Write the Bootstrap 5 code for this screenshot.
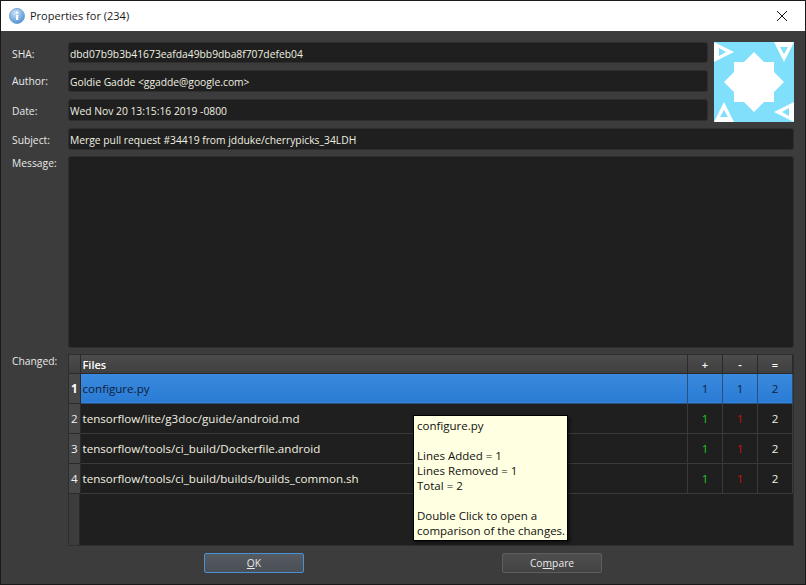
<!DOCTYPE html>
<html lang="en">
<head>
<meta charset="utf-8">
<title>Properties for (234)</title>
<link href="https://cdn.jsdelivr.net/npm/bootstrap@5.3.0/dist/css/bootstrap.min.css" rel="stylesheet">
<style>
html,body{height:100%;margin:0;background:#3c3c3c}
.win{width:806px;height:585px;border:1px solid #1a1a1a;background:#3c3c3c;font-family:"Open Sans","Noto Sans",sans-serif;font-size:10.3px;color:#e8e8e8;position:relative;overflow:hidden}
.titlebar{height:30px;background:#fff;color:#1a1a1a;font-size:11px;padding-left:8px;gap:5px}
.closex{width:46px;height:30px}
.dlgbody{padding:11px 11px 0 11px}
.lbl{width:56px;flex:none}
.fld{background:#1f1f1f;border:1px solid #2e2e2e;border-radius:3px;height:22px;line-height:22px;padding-left:1px;color:#f0f0e0;white-space:nowrap}
.toprows{gap:7px}
.toprow{height:22px}
.toprow.shortrow,.toprow.shortrow .fld{height:21px}
.logo{width:80px;height:80px;margin-left:6px;flex:none}
.subjrow{margin-top:6px;height:22px}
.lblsha{padding-top:5px}
.lblauthor{padding-top:2px}
.lbldate{padding-top:4px}
.lblsubj{padding-top:3px}
.msgrow{margin-top:6px;height:192px}
.msgrow .fld{height:192px}
.chgrow{margin-top:6px;height:192px}
.filetable{flex:1;background:linear-gradient(90deg,#3c3c3c 10px,#2a2a2a 10px,#2a2a2a 11px,#1f1f1f 11px);border:1px solid #2e2e2e;height:192px;font-size:11.6px}
.filetable table{width:100%;table-layout:fixed;border-collapse:collapse;color:#f0f0e0}
.filetable th{height:18px;line-height:14px;padding:2px 0 0;font-weight:600;font-size:11px;background:linear-gradient(#4c4c4c,#3f3f3f);border-right:1px solid #2a2a2a;border-bottom:1px solid #2a2a2a;text-align:center;color:#fff}
.filetable th.fname{text-align:left;padding-left:2px}
.filetable td{height:30px;padding:1px 0 0;line-height:16px;border-right:1px solid #3a3a3a;border-bottom:1px solid #3a3a3a;text-align:center;background:#1f1f1f}
.filetable td.rownum{background:#474747;border-right:1px solid #2a2a2a;border-bottom:1px solid #2a2a2a;color:#f0f0f0}
.filetable td.fname{text-align:left;padding-left:2px;white-space:nowrap}
.filetable tr.sel td{background:linear-gradient(#3a8ade,#2a7bd4);color:#10203a;border-color:#2a4f78}
.filetable tr.sel td.rownum{background:#474747;color:#fff;border-color:#2a2a2a;font-weight:700}
.plus{color:#22cc22}.minus{color:#cc1010}
.btnrow{height:20px;margin-top:7px;padding-left:192px;gap:198px}
.dlgbtn{width:100px;height:20px;padding:0;font-size:10.3px;line-height:17px;color:#e8e8e8;background:linear-gradient(#4e4e4e,#434343);border:1px solid #5e5e5e;border-radius:2px}
.dlgbtn:hover{color:#e8e8e8;background:#4e4e4e;border-color:#5e5e5e}
.dlgbtn.dflt{background:linear-gradient(#565b62,#4a4f55);border:1px solid #4a90d9}
.tip{position:absolute;left:412px;top:414px;width:155px;height:126px;background:#ffffe1;border:1px solid #000;font-size:11.5px;color:#101010;padding:2px 3px;line-height:15px;white-space:pre;box-shadow:2px 2px 3px rgba(0,0,0,.5)}
</style>
</head>
<body>
<div class="win d-flex flex-column">
  <div class="titlebar d-flex align-items-center">
    <svg width="16" height="16" viewBox="0 0 16 16"><defs><radialGradient id="ib" cx=".4" cy=".3" r=".8"><stop offset="0" stop-color="#cfe6fa"/><stop offset="1" stop-color="#3f86cf"/></radialGradient></defs><circle cx="8" cy="8" r="7.5" fill="url(#ib)" stroke="#7aa6cf"/><rect x="7" y="7" width="2.2" height="5" fill="#fff"/><rect x="7" y="3.6" width="2.2" height="2" fill="#fff"/></svg>
    <span class="flex-grow-1">Properties for (234)</span>
    <div class="closex d-flex align-items-center justify-content-center"><svg width="10" height="10" viewBox="0 0 10 10"><path d="M0 0L10 10M10 0L0 10" stroke="#111" stroke-width="1" fill="none"/></svg></div>
  </div>
  <div class="dlgbody flex-grow-1">
    <div class="d-flex">
      <div class="d-flex flex-column toprows flex-grow-1">
        <div class="d-flex align-items-center toprow shortrow"><div class="lbl lblsha">SHA:</div><div class="fld flex-grow-1">dbd07b9b3b41673eafda49bb9dba8f707defeb04</div></div>
        <div class="d-flex align-items-center toprow"><div class="lbl lblauthor">Author:</div><div class="fld flex-grow-1">Goldie Gadde &lt;ggadde@google.com&gt;</div></div>
        <div class="d-flex align-items-center toprow"><div class="lbl lbldate">Date:</div><div class="fld flex-grow-1">Wed Nov 20 13:15:16 2019 -0800</div></div>
      </div>
      <svg class="logo" viewBox="0 0 80 80"><rect width="80" height="80" fill="#80dffb"/><path d="M40 10L50 20H60V30L70 40L60 50V60H50L40 70L30 60H20V50L10 40L20 30V20H30Z" fill="#fff"/><path d="M0 0L20 10L0 20Z M5 6V14L12 10Z" fill="#fff" fill-rule="evenodd"/><path d="M60 0H80L70 20Z M66 5L70 12L74 5Z" fill="#fff" fill-rule="evenodd"/><path d="M10 60L20 80H0Z M10 68L6 75H14Z" fill="#fff" fill-rule="evenodd"/><path d="M80 60V80L60 70Z M75 66L68 70L75 74Z" fill="#fff" fill-rule="evenodd"/></svg>
    </div>
    <div class="d-flex align-items-center subjrow"><div class="lbl lblsubj">Subject:</div><div class="fld flex-grow-1">Merge pull request #34419 from jdduke/cherrypicks_34LDH</div></div>
    <div class="d-flex msgrow"><div class="lbl">Message:</div><div class="fld flex-grow-1"></div></div>
    <div class="d-flex chgrow"><div class="lbl">Changed:</div>
      <div class="filetable">
        <table>
          <colgroup><col style="width:11px"><col><col style="width:35px"><col style="width:35px"><col style="width:35px"></colgroup>
          <thead><tr><th></th><th class="fname">Files</th><th>+</th><th>-</th><th>=</th></tr></thead>
          <tbody>
            <tr class="sel"><td class="rownum">1</td><td class="fname">configure.py</td><td>1</td><td>1</td><td>2</td></tr>
            <tr><td class="rownum">2</td><td class="fname">tensorflow/lite/g3doc/guide/android.md</td><td class="plus">1</td><td class="minus">1</td><td>2</td></tr>
            <tr><td class="rownum">3</td><td class="fname">tensorflow/tools/ci_build/Dockerfile.android</td><td class="plus">1</td><td class="minus">1</td><td>2</td></tr>
            <tr><td class="rownum">4</td><td class="fname">tensorflow/tools/ci_build/builds/builds_common.sh</td><td class="plus">1</td><td class="minus">1</td><td>2</td></tr>
          </tbody>
        </table>
      </div>
    </div>
    <div class="d-flex btnrow">
      <button type="button" class="btn dlgbtn dflt"><u>O</u>K</button>
      <button type="button" class="btn dlgbtn">Co<u>m</u>pare</button>
    </div>
  </div>
  <div class="tip">configure.py

Lines Added = 1
Lines Removed = 1
Total = 2

Double Click to open a
comparison of the changes.</div>
</div>
<script src="https://cdn.jsdelivr.net/npm/bootstrap@5.3.0/dist/js/bootstrap.bundle.min.js"></script>
</body>
</html>
